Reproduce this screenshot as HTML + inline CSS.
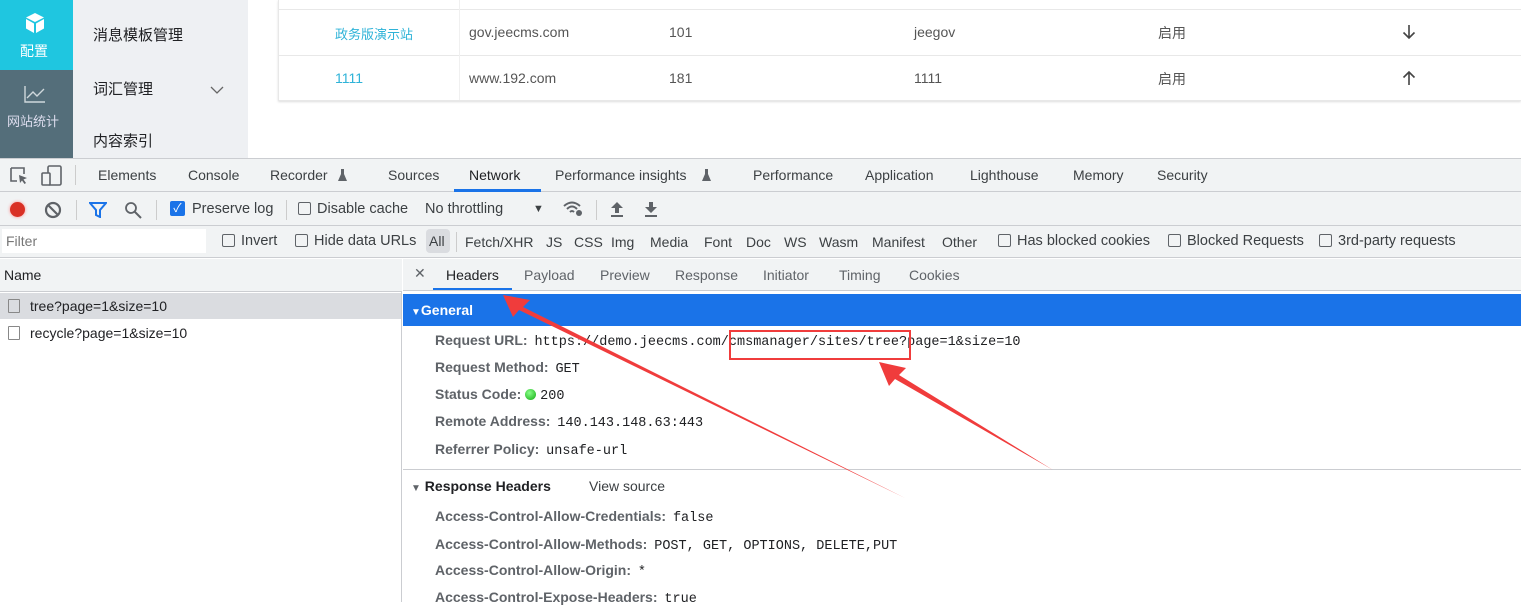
<!DOCTYPE html>
<html><head><meta charset="utf-8"><style>
*{margin:0;padding:0;box-sizing:border-box}
body{width:1521px;height:602px;overflow:hidden;position:relative;font-family:"Liberation Sans","Noto Sans CJK SC",sans-serif;font-size:14px;color:#202124;background:#fff}
.a{position:absolute;white-space:nowrap}
.mono{font-family:"Liberation Mono",monospace;font-size:13.5px}
.cb{display:inline-block;width:13px;height:13px;border:1px solid #5f6368;border-radius:2px;vertical-align:-2px;margin-right:6px}
.b{font-weight:bold;color:#5f6368}
.f{top:234px;color:#3c4043}
</style></head><body>
<!-- app top -->
<div class="a" style="left:0;top:0;width:73px;height:158px;background:#546e7a"></div>
<div class="a" style="left:0;top:0;width:73px;height:70px;background:#1fc6e0"></div>
<svg class="a" style="left:24px;top:12px" width="22" height="22" viewBox="0 0 22 22"><path d="M11 1 L20 5.5 L11 10 L2 5.5Z M2 7 L10 11.5 V21 L2 16.5Z M20 7 L12 11.5 V21 L20 16.5Z" fill="#fff"/></svg>
<div class="a" style="left:20px;top:41px;color:#fff;font-size:14px">配置</div>
<svg class="a" style="left:24px;top:85px" width="22" height="18"><path d="M1 1V17H21M3 13L9 7L13 11L20 4" stroke="#cfd8dc" fill="none" stroke-width="1.4"/></svg>
<div class="a" style="left:7px;top:111px;color:#dde;font-size:13px">网站统计</div>
<div class="a" style="left:73px;top:0;width:175px;height:158px;background:#eef0f3"></div>
<div class="a" style="left:93px;top:24px;font-size:15px">消息模板管理</div>
<div class="a" style="left:93px;top:78px;font-size:15px">词汇管理</div>
<svg class="a" style="left:210px;top:86px" width="14" height="9"><path d="M1 1L7 7L13 1" stroke="#666" fill="none" stroke-width="1.3"/></svg>
<div class="a" style="left:93px;top:130px;font-size:15px">内容索引</div>
<div class="a" style="left:278px;top:0;width:1243px;height:101px;border-left:1px solid #e8e8e8;border-bottom:1px solid #e8e8e8;box-shadow:0 1px 2px #ddd"></div>
<div class="a" style="left:279px;top:9px;width:1242px;border-top:1px solid #e8e8e8"></div>
<div class="a" style="left:279px;top:55px;width:1242px;border-top:1px solid #e8e8e8"></div>
<div class="a" style="left:459px;top:0;height:100px;border-left:1px solid #f0f0f0"></div>
<div class="a" style="left:335px;top:24px;color:#2fb3d8;font-size:13px">政务版演示站</div>
<div class="a" style="left:335px;top:70px;color:#2fb3d8;font-size:14px">1111</div>
<div class="a" style="left:469px;top:24px;font-size:14px;color:#555">gov.jeecms.com</div>
<div class="a" style="left:469px;top:70px;font-size:14px;color:#555">www.192.com</div>
<div class="a" style="left:669px;top:24px;color:#555">101</div><div class="a" style="left:669px;top:70px;color:#555">181</div>
<div class="a" style="left:914px;top:24px;color:#555">jeegov</div><div class="a" style="left:914px;top:70px;color:#555">1111</div>
<div class="a" style="left:1158px;top:23px;color:#555;font-size:14px">启用</div><div class="a" style="left:1158px;top:69px;color:#555;font-size:14px">启用</div>
<svg class="a" style="left:1402px;top:24px" width="14" height="16"><path d="M7 1V14M1.5 8.5L7 14L12.5 8.5" stroke="#444" stroke-width="1.6" fill="none"/></svg>
<svg class="a" style="left:1402px;top:70px" width="14" height="16"><path d="M7 15V2M1.5 7.5L7 2L12.5 7.5" stroke="#444" stroke-width="1.6" fill="none"/></svg>
<!-- devtools tabbar -->
<div class="a" style="left:0;top:158px;width:1521px;height:34px;background:#f1f3f4;border-top:1px solid #cbcdd1;border-bottom:1px solid #cbcdd1"></div>
<svg class="a" style="left:9px;top:166px" width="20" height="20"><path d="M2 2H15V8M2 2V15H8" stroke="#5f6368" fill="none" stroke-width="1.6"/><path d="M10 9L18 12L14.5 13.5L17 17L15.5 18L13 14.5L11 17Z" fill="#5f6368"/></svg>
<svg class="a" style="left:41px;top:165px" width="22" height="22"><rect x="7" y="1" width="13" height="19" rx="1.5" stroke="#5f6368" fill="none" stroke-width="1.6"/><rect x="1" y="8" width="8" height="12" rx="1" stroke="#5f6368" fill="#f1f3f4" stroke-width="1.6"/></svg>
<div class="a" style="left:75px;top:165px;height:20px;border-left:1px solid #ccc"></div>
<div class="a" style="top:167px;left:98px;color:#3c4043">Elements</div>
<div class="a" style="top:167px;left:188px;color:#3c4043">Console</div>
<div class="a" style="top:167px;left:270px;color:#3c4043">Recorder</div>
<svg class="a" style="left:337px;top:168px" width="11" height="14"><path d="M3 1H8M4 1V6L1 13H10L7 6V1" fill="#5f6368"/></svg>
<div class="a" style="top:167px;left:388px;color:#3c4043">Sources</div>
<div class="a" style="top:167px;left:469px;color:#202124">Network</div>
<div class="a" style="left:454px;top:189px;width:87px;height:3px;background:#1a73e8"></div>
<div class="a" style="top:167px;left:555px;color:#3c4043">Performance insights</div>
<svg class="a" style="left:701px;top:168px" width="11" height="14"><path d="M3 1H8M4 1V6L1 13H10L7 6V1" fill="#5f6368"/></svg>
<div class="a" style="top:167px;left:753px;color:#3c4043">Performance</div>
<div class="a" style="top:167px;left:865px;color:#3c4043">Application</div>
<div class="a" style="top:167px;left:970px;color:#3c4043">Lighthouse</div>
<div class="a" style="top:167px;left:1073px;color:#3c4043">Memory</div>
<div class="a" style="top:167px;left:1157px;color:#3c4043">Security</div>
<!-- toolbar -->
<div class="a" style="left:0;top:192px;width:1521px;height:34px;background:#f1f3f4;border-bottom:1px solid #cbcdd1"></div>
<div class="a" style="left:10px;top:202px;width:15px;height:15px;border-radius:50%;background:#d93025;box-shadow:0 0 3px #f88"></div>
<svg class="a" style="left:44px;top:201px" width="18" height="18"><circle cx="9" cy="9" r="7" stroke="#5f6368" stroke-width="2.2" fill="none"/><path d="M4 4L14 14" stroke="#5f6368" stroke-width="2.2"/></svg>
<div class="a" style="left:76px;top:200px;height:20px;border-left:1px solid #ccc"></div>
<svg class="a" style="left:89px;top:202px" width="18" height="16"><path d="M1 1H17L11 8V15L7 13V8Z" fill="none" stroke="#1a73e8" stroke-width="2"/></svg>
<svg class="a" style="left:124px;top:201px" width="18" height="18"><circle cx="7" cy="7" r="5" stroke="#5f6368" stroke-width="1.8" fill="none"/><path d="M11 11L17 17" stroke="#5f6368" stroke-width="2"/></svg>
<div class="a" style="left:156px;top:200px;height:20px;border-left:1px solid #ccc"></div>
<div class="a" style="left:170px;top:201px;width:15px;height:15px;background:#1a73e8;border-radius:2px;color:#fff;font-size:12px;text-align:center;line-height:15px">✓</div>
<div class="a" style="left:192px;top:201px;color:#3c4043;font-size:14.5px">Preserve log</div>
<div class="a" style="left:286px;top:200px;height:20px;border-left:1px solid #ccc"></div>
<div class="a" style="left:298px;top:201px;color:#3c4043;font-size:14.5px"><span class="cb"></span>Disable cache</div>
<div class="a" style="left:425px;top:201px;color:#3c4043;font-size:14.5px">No throttling</div>
<div class="a" style="left:533px;top:203px;color:#3c4043;font-size:11px">▼</div>
<svg class="a" style="left:562px;top:199px" width="22" height="18"><path d="M2 7Q10 0 18 7M5 10Q10 5 15 10M8 13Q10 11 12 13" stroke="#5f6368" stroke-width="2" fill="none"/><circle cx="17" cy="14" r="3" fill="#5f6368"/></svg>
<div class="a" style="left:596px;top:200px;height:20px;border-left:1px solid #ccc"></div>
<svg class="a" style="left:609px;top:201px" width="16" height="16"><path d="M8 1L14 7H10V12H6V7H2Z M2 14H14V16H2Z" fill="#5f6368"/></svg>
<svg class="a" style="left:643px;top:201px" width="16" height="16"><path d="M8 12L14 6H10V1H6V6H2Z M2 14H14V16H2Z" fill="#5f6368"/></svg>
<!-- filter row -->
<div class="a" style="left:0;top:226px;width:1521px;height:32px;background:#f1f3f4;border-bottom:1px solid #cbcdd1"></div>
<div class="a" style="left:2px;top:229px;width:204px;height:24px;background:#fff;color:#777;padding:4px 4px;font-size:14px">Filter</div>
<div class="a" style="left:222px;top:233px;color:#3c4043;font-size:14.5px"><span class="cb"></span>Invert</div>
<div class="a" style="left:295px;top:233px;color:#3c4043;font-size:14.5px"><span class="cb"></span>Hide data URLs</div>
<div class="a" style="left:426px;top:229px;width:24px;height:24px;background:#dadce0;border-radius:4px;padding:4px 3px;color:#3c4043">All</div>
<div class="a" style="left:456px;top:232px;height:20px;border-left:1px solid #ccc"></div>
<div class="a f" style="left:465px">Fetch/XHR</div>
<div class="a f" style="left:546px">JS</div>
<div class="a f" style="left:574px">CSS</div>
<div class="a f" style="left:611px">Img</div>
<div class="a f" style="left:650px">Media</div>
<div class="a f" style="left:704px">Font</div>
<div class="a f" style="left:746px">Doc</div>
<div class="a f" style="left:784px">WS</div>
<div class="a f" style="left:819px">Wasm</div>
<div class="a f" style="left:872px">Manifest</div>
<div class="a f" style="left:942px">Other</div>
<div class="a" style="left:998px;top:233px;color:#3c4043;font-size:14.5px"><span class="cb"></span>Has blocked cookies</div>
<div class="a" style="left:1168px;top:233px;color:#3c4043;font-size:14.5px"><span class="cb"></span>Blocked Requests</div>
<div class="a" style="left:1319px;top:233px;color:#3c4043;font-size:14.5px"><span class="cb"></span>3rd-party requests</div>
<!-- left list -->
<div class="a" style="left:0;top:259px;width:402px;height:343px;border-right:1px solid #cbcdd1"></div>
<div class="a" style="left:0;top:259px;width:402px;height:33px;background:#f1f3f4;border-bottom:1px solid #cbcdd1"></div>
<div class="a" style="left:4px;top:267px;color:#202124">Name</div>
<div class="a" style="left:0;top:293px;width:401px;height:26px;background:#dadce0"></div>
<div class="a" style="left:8px;top:298px"><span class="cb" style="border-color:#888;width:12px;height:14px;border-radius:1px;margin-right:10px"></span>tree?page=1&amp;size=10</div>
<div class="a" style="left:8px;top:325px"><span class="cb" style="border-color:#888;width:12px;height:14px;border-radius:1px;margin-right:10px"></span>recycle?page=1&amp;size=10</div>
<!-- right detail -->
<div class="a" style="left:403px;top:259px;width:1118px;height:32px;background:#f1f3f4;border-bottom:1px solid #cbcdd1"></div>
<div class="a" style="left:414px;top:265px;color:#5f6368">✕</div>
<div class="a" style="left:446px;top:267px">Headers</div>
<div class="a" style="left:433px;top:288px;width:79px;height:2px;background:#1a73e8"></div>
<div class="a" style="left:524px;top:267px;color:#5f6368">Payload</div>
<div class="a" style="left:600px;top:267px;color:#5f6368">Preview</div>
<div class="a" style="left:675px;top:267px;color:#5f6368">Response</div>
<div class="a" style="left:763px;top:267px;color:#5f6368">Initiator</div>
<div class="a" style="left:839px;top:267px;color:#5f6368">Timing</div>
<div class="a" style="left:909px;top:267px;color:#5f6368">Cookies</div>
<div class="a" style="left:403px;top:294px;width:1118px;height:32px;background:#1a73e8"></div>
<div class="a" style="left:411px;top:302px;color:#fff;font-weight:bold"><span style="font-size:10px">▼</span>General</div>
<div class="a" style="left:435px;top:332px"><span class="b">Request URL:</span> <span class="mono" style="margin-left:3px">https://demo.jeecms.com/cmsmanager/sites/tree?page=1&amp;size=10</span></div>
<div class="a" style="left:435px;top:359px"><span class="b">Request Method:</span> <span class="mono" style="margin-left:3px">GET</span></div>
<div class="a" style="left:435px;top:386px"><span class="b">Status Code:</span> <span style="display:inline-block;width:11px;height:11px;border-radius:50%;background:radial-gradient(circle at 40% 35%,#8f8,#1a1);vertical-align:-1px"></span> <span class="mono">200</span></div>
<div class="a" style="left:435px;top:413px"><span class="b">Remote Address:</span> <span class="mono" style="margin-left:3px">140.143.148.63:443</span></div>
<div class="a" style="left:435px;top:441px"><span class="b">Referrer Policy:</span> <span class="mono" style="margin-left:3px">unsafe-url</span></div>
<div class="a" style="left:403px;top:469px;width:1118px;border-top:1px solid #cbcdd1"></div>
<div class="a" style="left:411px;top:478px;font-weight:bold"><span style="font-size:10px;color:#5f6368">▼</span> Response Headers</div>
<div class="a" style="left:589px;top:478px;color:#3c4043">View source</div>
<div class="a" style="left:435px;top:508px"><span class="b">Access-Control-Allow-Credentials:</span> <span class="mono" style="margin-left:3px">false</span></div>
<div class="a" style="left:435px;top:536px"><span class="b">Access-Control-Allow-Methods:</span> <span class="mono" style="margin-left:3px">POST, GET, OPTIONS, DELETE,PUT</span></div>
<div class="a" style="left:435px;top:562px"><span class="b">Access-Control-Allow-Origin:</span> <span class="mono" style="margin-left:3px">*</span></div>
<div class="a" style="left:435px;top:589px"><span class="b">Access-Control-Expose-Headers:</span> <span class="mono" style="margin-left:3px">true</span></div>
<!-- annotations -->
<div class="a" style="left:729px;top:330px;width:182px;height:30px;border:2px solid #f03c3c"></div>
<svg class="a" style="left:0;top:0" width="1521" height="602"><path d="M503 295 L530 300 L523 307 L905 498 L519 310 L513 317Z" fill="#f03c3c"/><path d="M879 362 L906 368 L899 375 L1053 470 L895 379 L889 386Z" fill="#f03c3c"/></svg>
</body></html>
